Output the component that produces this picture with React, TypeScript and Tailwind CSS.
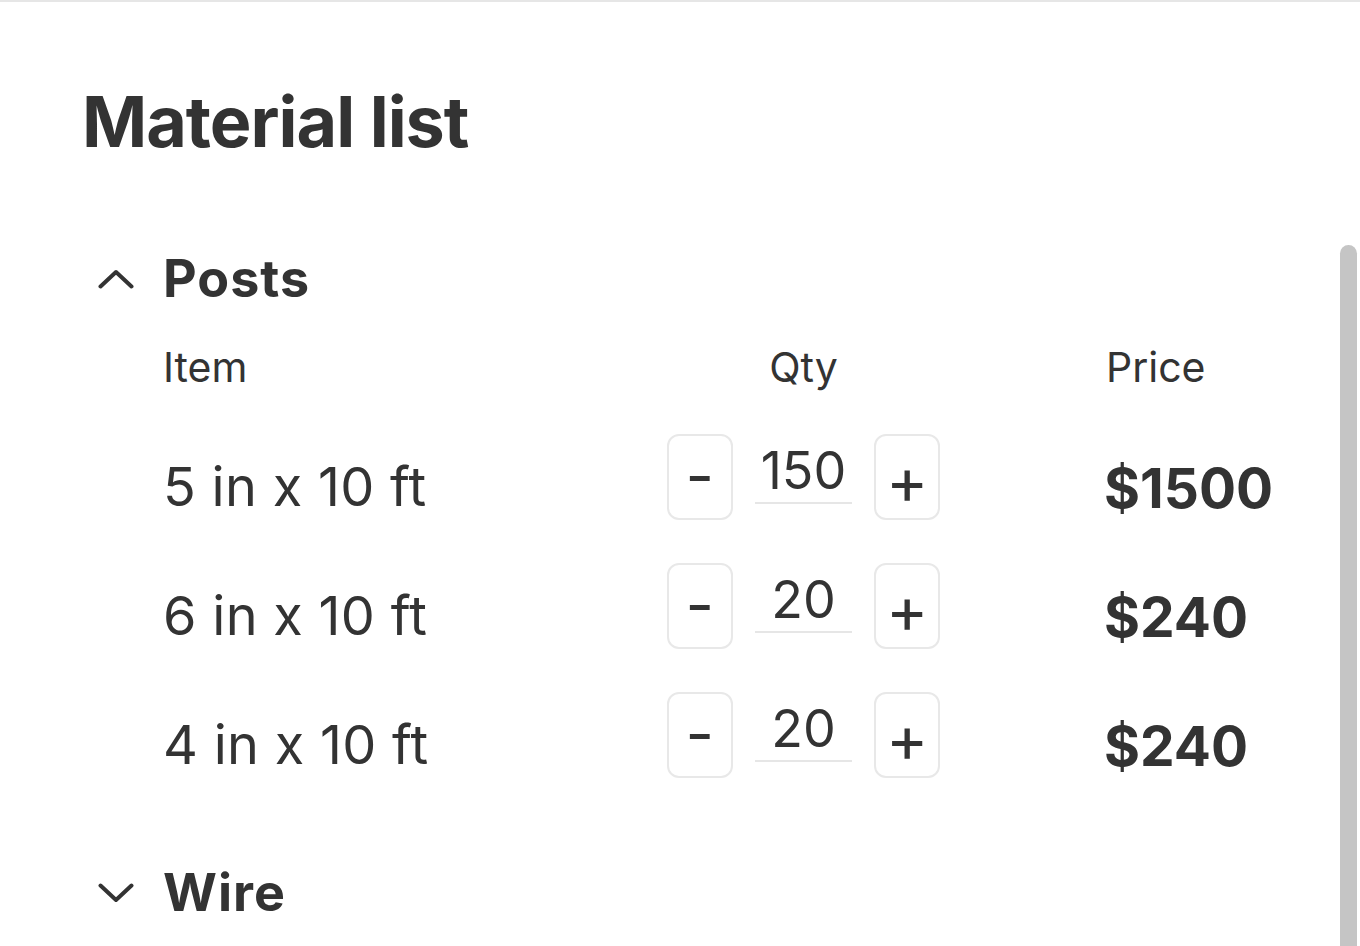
import React from "react";

function Chevron({ up }: { up: boolean }) {
  return (
    <svg width="36" height="20" viewBox="0 0 36 20" className="shrink-0">
      <path
        d={up ? "M2.5 17.5 L18 3 L33.5 17.5" : "M2.5 2.5 L18 17 L33.5 2.5"}
        fill="none"
        stroke="#333333"
        strokeWidth="4"
        strokeLinecap="round"
        strokeLinejoin="round"
      />
    </svg>
  );
}

function Stepper({ value }: { value: number }) {
  return (
    <div className="flex items-start">
      <button className="w-[66px] h-[86px] border-2 border-[#e8e8e8] rounded-[12px] flex items-center justify-center text-[62px] leading-none text-[#333333] pb-[2px]">
        -
      </button>
      <div className="w-[98px] mx-[22px] pt-[6px] leading-[62px] text-[52px] text-center text-[#333333] border-b-2 border-[#e6e6e6]">
        {value}
      </div>
      <button className="w-[66px] h-[86px] border-2 border-[#e8e8e8] rounded-[12px] flex items-center justify-center text-[64px] leading-none text-[#333333] pt-[8px]">
        +
      </button>
    </div>
  );
}

const rows = [
  { name: "5 in x 10 ft", qty: 150, price: "$1500" },
  { name: "6 in x 10 ft", qty: 20, price: "$240" },
  { name: "4 in x 10 ft", qty: 20, price: "$240" },
];

export default function App() {
  return (
    <div
      className="relative w-[1360px] h-[946px] overflow-hidden bg-white text-[#333333]"
      style={{ fontFamily: "Inter, 'Noto Sans', sans-serif" }}
    >
      <div className="h-[2px] bg-[#e6e6e6]" />
      <div className="pl-[82px] pt-[85px]">
        <h1 className="text-[70px] leading-none font-bold tracking-[-1px]">Material list</h1>
      </div>

      <div className="pl-[98px] mt-[96px]">
        <div className="flex items-center h-[52px]">
          <Chevron up />
          <span className="ml-[29px] text-[52px] leading-none font-bold tracking-[1px]">Posts</span>
        </div>

        <div className="pl-[65px]">
          <div className="grid grid-cols-[502px_275px_1fr] mt-[42px] text-[41px] leading-none">
            <div>Item</div>
            <div className="text-center pl-[2px]">Qty</div>
            <div className="pl-[166px]">Price</div>
          </div>

          <div className="flex flex-col gap-[43px] mt-[46px]">
            {rows.map((r) => (
              <div key={r.name} className="grid grid-cols-[502px_275px_1fr] h-[86px] items-start">
                <div className="text-[54px] leading-[106px] whitespace-nowrap tracking-[0.3px]">{r.name}</div>
                <div className="pl-[2px]">
                  <Stepper value={r.qty} />
                </div>
                <div className="pl-[164px] text-[55px] leading-[108px] font-bold whitespace-nowrap">{r.price}</div>
              </div>
            ))}
          </div>
        </div>

        <div className="flex items-center h-[52px] mt-[89px]">
          <Chevron up={false} />
          <span className="ml-[29px] text-[52px] leading-none font-bold tracking-[1px]">Wire</span>
        </div>
      </div>

      <div className="absolute top-[245px] right-[3px] bottom-0 w-[17px] rounded-t-full bg-[#c5c5c5]" />
    </div>
  );
}
